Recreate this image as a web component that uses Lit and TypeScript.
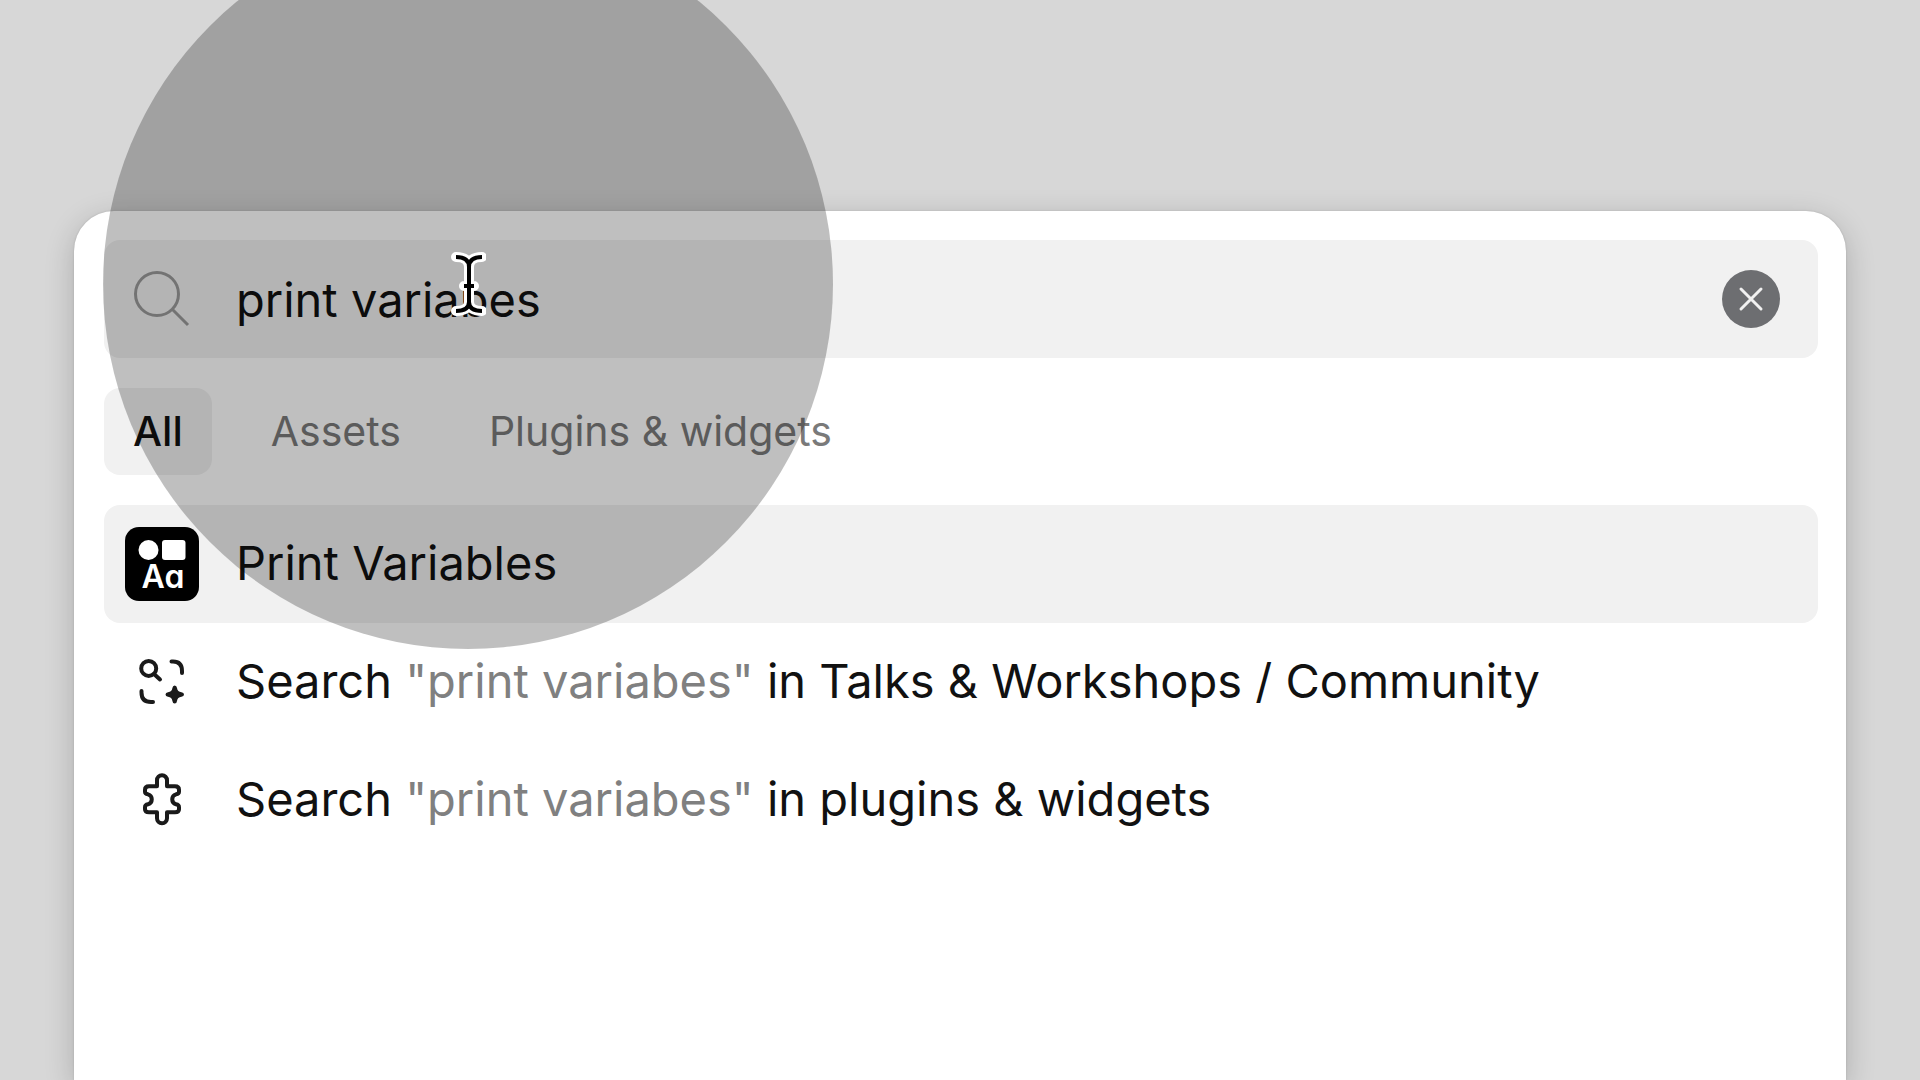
import { LitElement, html, css, svg, nothing } from "lit";
import { customElement, property, state } from "lit/decorators.js";

type IconName = "variables" | "community" | "plugin";

interface Result {
  icon: IconName;
  before: string;
  query?: string;
  after?: string;
}

const TABS = ["All", "Assets", "Plugins & widgets"];

const RESULTS: Result[] = [
  { icon: "variables", before: "Print Variables" },
  { icon: "community", before: "Search ", query: "print variabes", after: " in Talks & Workshops / Community" },
  { icon: "plugin", before: "Search ", query: "print variabes", after: " in plugins & widgets" },
];

@customElement("result-icon")
class ResultIcon extends LitElement {
  @property() name: IconName = "plugin";

  static styles = css`
    :host {
      display: block;
      width: 74px;
      height: 74px;
      flex: none;
    }
    svg {
      display: block;
      width: 100%;
      height: 100%;
    }
    .line {
      fill: none;
      stroke: #1a1a1a;
      stroke-width: 4;
      stroke-linecap: round;
      stroke-linejoin: round;
    }
    .solid {
      fill: #1a1a1a;
    }
    .letters {
      font: 600 32px "Inter", sans-serif;
      font-feature-settings: "cv11";
      fill: #fff;
    }
  `;

  private shapes() {
    switch (this.name) {
      case "variables":
        return svg`
          <rect width="74" height="74" rx="14" fill="#000" />
          <circle cx="23.500" cy="23" r="10" fill="#fff" />
          <rect x="37" y="13" width="23.500" height="20" rx="3" fill="#fff" />
          <text class="letters" x="38" y="61" text-anchor="middle">Aa</text>`;
      case "community":
        return svg`
          <g class="line">
            <circle cx="23.700" cy="23.400" r="7.500" />
            <path d="M29 29 35 34.500" />
            <path d="M46.500 16.500H48Q57 16.500 57 26V28" />
            <path d="M16.500 46V47.500Q16.500 57 26 57H28" />
          </g>
          <path class="solid" d="M49.700 40.500Q51.700 40.500 52 43Q52.500 46.700 56.500 47.200Q59 47.500 59 49.500T56.500 51.800Q52.500 52.300 52 56Q51.700 58.500 49.700 58.500T47.400 56Q46.900 52.300 43 51.800Q40.500 51.500 40.500 49.500T43 47.200Q46.900 46.700 47.400 43Q47.700 40.500 49.700 40.500Z" />`;
      default:
        return svg`
          <path class="line" transform="translate(0 -1.200)" d="M32 24.500V18.500A5 5 0 0 1 42 18.500V24.500H50Q54 24.500 54 28V30Q54 32 51 32.500A5.200 5.200 0 0 0 51 42.500Q54 43 54 45.500V47.500Q54 50.500 50 50.500H42V56.500A5 5 0 0 1 32 56.500V50.500H24Q20 50.500 20 47.500V45.500Q20 43 23 42.500A5.200 5.200 0 0 0 23 32.500Q20 32 20 30V28Q20 24.500 24 24.500Z" />`;
    }
  }

  render() {
    return html`<svg viewBox="0 0 74 74" aria-hidden="true">${this.shapes()}</svg>`;
  }
}

@customElement("app-root")
class AppRoot extends LitElement {
  @state() private activeTab = 0;
  @state() private activeResult = 0;
  @state() private query = "print variabes";

  static styles = css`
    :host {
      display: block;
      font-family: "Inter", "Liberation Sans", sans-serif;
      font-optical-sizing: none;
      color: #111;
    }
    .stage {
      position: relative;
      box-sizing: border-box;
      min-height: 100vh;
      display: flex;
      flex-direction: column;
      padding: 211px 74px 0;
      background: #d7d7d7;
      overflow: hidden;
    }
    .panel {
      flex: 1;
      display: flex;
      flex-direction: column;
      gap: 30px;
      padding: 29px 28px 29px 30px;
      border-radius: 40px 40px 0 0;
      background: #fff;
      box-shadow: 0 0 2px rgba(0, 0, 0, 0.16), 0 8px 30px rgba(0, 0, 0, 0.2);
    }
    .search {
      display: flex;
      align-items: center;
      gap: 37px;
      height: 118px;
      box-sizing: border-box;
      padding: 0 38px 0 21px;
      border-radius: 16px;
      background: #f1f1f1;
    }
    .lens {
      flex: none;
      width: 74px;
      height: 74px;
      fill: none;
      stroke: #9a9a9a;
      stroke-width: 3;
    }
    .field {
      flex: 1;
      min-width: 0;
      padding: 2px 0 0;
      border: 0;
      outline: 0;
      background: transparent;
      color: inherit;
      font: 400 47px/72px "Inter", "Liberation Sans", sans-serif;
    }
    .clear {
      flex: none;
      width: 58px;
      height: 58px;
      padding: 0;
      border: 0;
      border-radius: 50%;
      background: #6d6e71;
    }
    .clear svg {
      display: block;
      width: 100%;
      height: 100%;
      fill: none;
      stroke: #f1f1f1;
      stroke-width: 3;
      stroke-linecap: round;
    }
    .tabs {
      display: flex;
      gap: 30px;
    }
    .tab {
      padding: 0 29px;
      border: 0;
      border-radius: 16px;
      background: transparent;
      color: #7a7a7a;
      font: 400 41px/87px "Inter", "Liberation Sans", sans-serif;
      white-space: nowrap;
    }
    .tab.active {
      background: #f1f1f1;
      color: #111;
      font-weight: 550;
    }
    .results {
      display: flex;
      flex-direction: column;
      margin: 0;
      padding: 0;
      list-style: none;
    }
    .result {
      display: flex;
      align-items: center;
      gap: 37px;
      width: 100%;
      height: 118px;
      box-sizing: border-box;
      padding: 0 21px;
      border: 0;
      border-radius: 16px;
      background: transparent;
      color: inherit;
      text-align: left;
      font: 400 47px/72px "Inter", "Liberation Sans", sans-serif;
    }
    .result.active {
      background: #f1f1f1;
    }
    .label {
      padding-bottom: 2px;
      white-space: pre;
    }
    .typed {
      color: #808080;
    }
    .pointer {
      position: absolute;
      left: 103px;
      top: -81px;
      width: 730px;
      height: 730px;
      display: grid;
      place-items: center;
      border-radius: 50%;
      background: rgba(0, 0, 0, 0.25);
      pointer-events: none;
    }
    .caret {
      width: 36px;
      height: 68px;
      fill: none;
      stroke-linejoin: round;
    }
    .halo {
      stroke: #fff;
      stroke-width: 10;
      stroke-linecap: round;
    }
    .ink {
      stroke: #000;
      stroke-width: 4;
    }
  `;

  private onInput(event: Event) {
    this.query = (event.target as HTMLInputElement).value;
  }

  private renderResult(result: Result, index: number) {
    const active = index === this.activeResult ? "active" : "";
    return html`<li>
      <button class="result ${active}" @click=${() => (this.activeResult = index)}>
        <result-icon name=${result.icon}></result-icon>
        <span class="label">${result.before}${result.query
          ? html`<span class="typed">"${result.query}"</span>`
          : nothing}${result.after ?? nothing}</span>
      </button>
    </li>`;
  }

  render() {
    const beam = "M6 7Q19 7 19 17V52Q19 61 6 61M32 7Q19 7 19 17M19 52Q19 61 32 61M14 36H24";
    return html`
      <main class="stage">
        <section class="panel">
          <div class="search">
            <svg class="lens" viewBox="0 0 74 74" aria-hidden="true">
              <circle cx="32" cy="32" r="21.500" />
              <path d="M47.500 47.500 63 63" />
            </svg>
            <input class="field" type="text" aria-label="Search" spellcheck="false" .value=${this.query} @input=${this.onInput} />
            <button class="clear" aria-label="Clear search" @click=${() => (this.query = "")}>
              <svg viewBox="0 0 58 58" aria-hidden="true"><path d="M19 19 39 39M39 19 19 39" /></svg>
            </button>
          </div>
          <nav class="tabs">
            ${TABS.map(
              (tab, i) => html`<button class="tab ${i === this.activeTab ? "active" : ""}" @click=${() => (this.activeTab = i)}>${tab}</button>`
            )}
          </nav>
          <ul class="results">
            ${RESULTS.map((result, i) => this.renderResult(result, i))}
          </ul>
        </section>
        <div class="pointer">
          <svg class="caret" viewBox="0 0 36 68" aria-hidden="true">
            <path class="halo" d=${beam} />
            <path class="ink" d=${beam} />
          </svg>
        </div>
      </main>
    `;
  }
}
